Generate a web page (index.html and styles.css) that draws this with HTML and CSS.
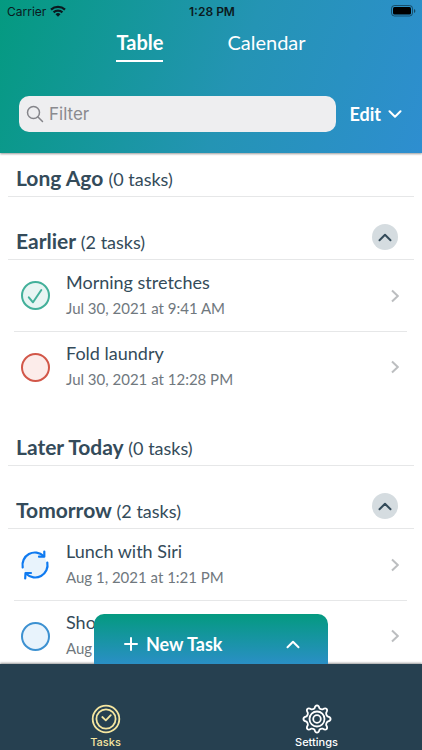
FILE: index.html
```html
<!DOCTYPE html>
<html lang="en">
  <head>
    <meta charset="UTF-8" />
    <meta name="viewport" content="width=device-width, initial-scale=1.0" />
    <title>Tasks</title>
    <link rel="stylesheet" href="styles.css" />
  </head>
  <body>
    <header class="top-bar">
      <div class="status-bar">
        <span class="carrier">
          Carrier
          <svg width="16" height="12" viewBox="0 0 16 12" fill="none" stroke="currentColor" stroke-width="2.2">
            <path d="M1 4.6a10.2 10.2 0 0 1 14 0" />
            <path d="M3.6 7.4a6.4 6.4 0 0 1 8.8 0" />
            <path d="M8 11.8l-2.5-2.6a3.6 3.6 0 0 1 5 0z" fill="currentColor" stroke="none" />
          </svg>
        </span>
        <span class="clock">1:28 PM</span>
        <svg class="battery" width="26" height="12" viewBox="0 0 26 12">
          <rect x="0.5" y="0.5" width="21" height="10.5" rx="3" fill="none" stroke="currentColor" stroke-opacity="0.45" />
          <rect x="2" y="2" width="18" height="7.5" rx="1.5" fill="currentColor" />
          <path d="M23 4v4q1.4-.6 1.4-2T23 4z" fill="currentColor" fill-opacity="0.5" />
        </svg>
      </div>

      <nav class="tabs">
        <a class="tab selected" href="#table">Table</a>
        <a class="tab" href="#calendar">Calendar</a>
      </nav>

      <div class="filter-row">
        <label class="search">
          <svg width="18" height="18" viewBox="0 0 18 18" fill="none" stroke="currentColor" stroke-width="1.5" stroke-linecap="round">
            <circle cx="7.5" cy="7.5" r="6" />
            <path d="M12 12l4.5 4.5" />
          </svg>
          <input type="text" placeholder="Filter" aria-label="Filter" />
        </label>
        <button class="edit-btn">
          Edit
          <svg width="14" height="8" viewBox="0 0 14 8" fill="none" stroke="currentColor" stroke-width="2" stroke-linecap="round" stroke-linejoin="round">
            <path d="M1.5 1.2L7 6.7l5.5-5.5" />
          </svg>
        </button>
      </div>
    </header>

    <main class="task-list">
      <section class="group">
        <div class="group-header">
          <h2>Long Ago <span>(0 tasks)</span></h2>
        </div>
      </section>

      <section class="group">
        <div class="group-header">
          <h2>Earlier <span>(2 tasks)</span></h2>
          <button class="collapse-btn" aria-label="Collapse Earlier">
            <svg width="14" height="9" viewBox="0 0 14 9" fill="none" stroke="currentColor" stroke-width="2" stroke-linecap="round" stroke-linejoin="round">
              <path d="M1.5 7.2L7 1.8l5.5 5.4" />
            </svg>
          </button>
        </div>
        <ul class="rows">
          <li class="row">
            <div class="status done">
              <input type="checkbox" id="task-1" checked />
              <svg width="30" height="30" viewBox="0 0 30 30" fill="none" stroke="currentColor" stroke-width="2" stroke-linecap="round" stroke-linejoin="round">
                <path d="M8.8 16.3l4.2 5L21.3 9" />
              </svg>
            </div>
            <label class="info" for="task-1">
              <span class="name">Morning stretches</span>
              <span class="date">Jul 30, 2021 at 9:41 AM</span>
            </label>
            <svg class="chevron" width="8" height="14" viewBox="0 0 8 14">
              <path d="M1 1.5L6.8 7 1 12.5" />
            </svg>
          </li>
          <li class="row">
            <div class="status late">
              <input type="checkbox" id="task-2" />
            </div>
            <label class="info" for="task-2">
              <span class="name">Fold laundry</span>
              <span class="date">Jul 30, 2021 at 12:28 PM</span>
            </label>
            <svg class="chevron" width="8" height="14" viewBox="0 0 8 14">
              <path d="M1 1.5L6.8 7 1 12.5" />
            </svg>
          </li>
        </ul>
      </section>

      <section class="group">
        <div class="group-header">
          <h2>Later Today <span>(0 tasks)</span></h2>
        </div>
      </section>

      <section class="group">
        <div class="group-header">
          <h2>Tomorrow <span>(2 tasks)</span></h2>
          <button class="collapse-btn" aria-label="Collapse Tomorrow">
            <svg width="14" height="9" viewBox="0 0 14 9" fill="none" stroke="currentColor" stroke-width="2" stroke-linecap="round" stroke-linejoin="round">
              <path d="M1.5 7.2L7 1.8l5.5 5.4" />
            </svg>
          </button>
        </div>
        <ul class="rows">
          <li class="row">
            <div class="status repeat">
              <input type="checkbox" id="task-3" />
              <svg width="30" height="30" viewBox="0 0 30 30" fill="none" stroke="currentColor" stroke-width="2.2" stroke-linecap="round" stroke-linejoin="round">
                <circle cx="15" cy="15" r="12" fill="#e8f3fc" stroke="none" />
                <path d="M2.7 17.500A12.500 12.500 0 0 1 23.600 6" />
                <path d="M24.300 1.500v5.200h-5.300" />
                <path d="M27.300 12.500A12.500 12.500 0 0 1 6.400 24" />
                <path d="M5.200 28.500l.3-5.500h5.500" />
              </svg>
            </div>
            <label class="info" for="task-3">
              <span class="name">Lunch with Siri</span>
              <span class="date">Aug 1, 2021 at 1:21 PM</span>
            </label>
            <svg class="chevron" width="8" height="14" viewBox="0 0 8 14">
              <path d="M1 1.5L6.8 7 1 12.5" />
            </svg>
          </li>
          <li class="row">
            <div class="status open">
              <input type="checkbox" id="task-4" />
            </div>
            <label class="info" for="task-4">
              <span class="name">Sho</span>
              <span class="date">Aug</span>
            </label>
            <svg class="chevron" width="8" height="14" viewBox="0 0 8 14">
              <path d="M1 1.5L6.8 7 1 12.5" />
            </svg>
          </li>
        </ul>
      </section>
    </main>

    <footer class="bottom-bar">
      <button class="new-task">
        <svg width="14" height="14" viewBox="0 0 14 14" fill="none" stroke="currentColor" stroke-width="2" stroke-linecap="round">
          <path d="M7 1v12M1 7h12" />
        </svg>
        <span>New Task</span>
        <svg class="expand" width="14" height="9" viewBox="0 0 14 9" fill="none" stroke="currentColor" stroke-width="2" stroke-linecap="round" stroke-linejoin="round">
          <path d="M1.5 7.2L7 1.8l5.5 5.4" />
        </svg>
      </button>

      <nav class="tab-bar">
        <a class="tab-item selected" href="#tasks">
          <svg width="30" height="30" viewBox="0 0 30 30" fill="none" stroke="currentColor" stroke-width="1.8" stroke-linecap="round" stroke-linejoin="round">
            <circle cx="15" cy="15" r="13.3" />
            <circle cx="15" cy="15" r="9.6" />
            <path d="M11.3 13l3.5 3.3 5-5.2" />
          </svg>
          Tasks
        </a>
        <a class="tab-item" href="#settings">
          <svg width="30" height="30" viewBox="0 0 30 30" fill="none" stroke="currentColor" stroke-width="1.8" stroke-linejoin="round">
            <path d="M12.4 4.6C12.9 2.4 13.4 1.4 15 1.4s2.1 1 2.6 3.2q1.6 1 2.9.8c1.9-1.2 3-1.6 4.1-.5s.7 2.2-.5 4.1q-.2 1.5 1.3 3.4c2.2.5 3.2 1 3.2 2.6s-1 2.1-3.2 2.6q-1.5 1.9-1.3 3.4c1.2 1.9 1.6 3 .5 4.1s-2.2.7-4.1-.5q-1.3-.2-2.9.8c-.5 2.200-1 3.200-2.600 3.200s-2.100-1-2.600-3.200q-1.600-1-2.900-.8c-1.900 1.200-3 1.600-4.100.5s-.7-2.200.5-4.100q.2-1.500-1.300-3.400C2.400 17.100 1.400 16.600 1.400 15s1-2.100 3.200-2.600q1.500-1.900 1.300-3.400c-1.200-1.900-1.600-3-.5-4.100s2.200-.7 4.100.5q1.300.2 2.900-.8z" />
            <circle cx="15" cy="15" r="7.5" />
            <circle cx="15" cy="15" r="3.800" />
          </svg>
          Settings
        </a>
      </nav>
    </footer>
  </body>
</html>
```

FILE: styles.css
```css
:root {
  --green: #049a80;
  --blue: #2e8ed0;
  --navy: #264050;
  --text-color: #344b5a;
  --muted: #70787e;
  --line: #e6e7e8;
  --yellow: #f5e6a0;
}

* {
  margin: 0;
  padding: 0;
  box-sizing: border-box;
}

body {
  height: 100vh;
  display: flex;
  flex-direction: column;
  font-family: Lato, "Open Sans", sans-serif;
  font-size: 18px;
  color: var(--text-color);
  background-color: #fff;
}

button {
  border: none;
  background: none;
  font: inherit;
  color: inherit;
  cursor: pointer;
}

a {
  color: inherit;
  text-decoration: none;
}

svg {
  display: block;
  flex-shrink: 0;
}

/* Header */
.top-bar {
  position: relative;
  z-index: 1;
  flex-shrink: 0;
  padding-bottom: 21px;
  color: #fff;
  background: linear-gradient(110deg, var(--green), #2494b4 55%, var(--blue));
  box-shadow: 0 1px 2px rgba(0, 0, 0, 0.4);
}

.status-bar {
  display: grid;
  grid-template-columns: 1fr auto 1fr;
  align-items: center;
  height: 22px;
  padding: 0 5px 0 7px;
  font-family: Inter, sans-serif;
  font-size: 12px;
  color: #0b1a20;
}

.carrier {
  display: flex;
  align-items: center;
  gap: 4px;
}

.clock {
  font-weight: 600;
}

.battery {
  justify-self: end;
  color: #000;
}

.tabs {
  display: flex;
  justify-content: center;
  gap: 64px;
  font-size: 20px;
  line-height: 24px;
  padding-top: 8px;
}

.tab {
  padding-bottom: 6px;
  border-bottom: 2px solid transparent;
}

.tab.selected {
  font-weight: 700;
  border-color: #fff;
}

.filter-row {
  display: flex;
  align-items: center;
  gap: 13px;
  padding: 34px 20px 0 19px;
}

.search {
  flex: 1;
  display: flex;
  align-items: center;
  gap: 5px;
  height: 36px;
  padding: 0 7px;
  border-radius: 10px;
  color: #85858a;
  background-color: #eeeef0;
}

.search input {
  flex: 1;
  min-width: 0;
  border: none;
  outline: none;
  background: none;
  font-family: Inter, sans-serif;
  font-size: 17px;
  color: var(--text-color);
}

.search input::placeholder {
  color: #8a8a8f;
}

.edit-btn {
  display: flex;
  align-items: center;
  gap: 7px;
  font-weight: 700;
}

/* Task list */
.task-list {
  flex: 1;
  min-height: 0;
  overflow-y: auto;
  scrollbar-width: none;
}

.group {
  padding: 0 8px;
  margin-bottom: 19px;
}

.group-header {
  display: flex;
  align-items: center;
  justify-content: space-between;
  height: 44px;
  padding: 5px 16px 0 8px;
  border-bottom: 1px solid var(--line);
}

.group-header h2 {
  font-size: 21px;
  font-weight: 700;
}

.group-header h2 span {
  font-size: 18px;
  font-weight: 400;
}

.collapse-btn {
  display: grid;
  place-items: center;
  width: 26px;
  height: 26px;
  margin-bottom: 6px;
  border-radius: 50%;
  background-color: #d5dce0;
}

.rows {
  list-style: none;
  padding: 0 7px 1px 6px;
}

.row {
  display: flex;
  align-items: center;
  gap: 16px;
  height: 71px;
  padding: 0 8px 0 6px;
}

.row + .row {
  border-top: 1px solid var(--line);
}

.status {
  display: grid;
  place-items: center;
  width: 30px;
}

.status > * {
  grid-area: 1 / 1;
}

.status svg {
  pointer-events: none;
}

.status input {
  appearance: none;
  width: 29px;
  height: 29px;
  border: 2px solid;
  border-radius: 50%;
  color: inherit;
  cursor: pointer;
}

.status.done {
  color: #43b09a;
}

.status.done input {
  background-color: #e8f5f3;
}

.status.late {
  color: #d25749;
}

.status.late input {
  background-color: #fcecea;
}

.status.open {
  color: #3d91d1;
}

.status.open input {
  background-color: #e8f3fc;
}

.status.repeat {
  color: #0f7af0;
}

.status.repeat input {
  border-color: transparent;
}

.info {
  flex: 1;
  display: flex;
  flex-direction: column;
  gap: 4px;
  padding-bottom: 2px;
}

.name {
  line-height: 22px;
}

.date {
  font-size: 15px;
  line-height: 22px;
  color: var(--muted);
}

.chevron {
  fill: none;
  stroke: #bcbec0;
  stroke-width: 2;
}

/* Footer */
.bottom-bar {
  position: relative;
  flex-shrink: 0;
  background-color: var(--navy);
  box-shadow: 0 -1px 2px rgba(0, 0, 0, 0.4);
}

.new-task {
  position: absolute;
  bottom: 100%;
  left: 50%;
  transform: translateX(-50%);
  display: flex;
  align-items: center;
  gap: 8px;
  width: 234px;
  height: 50px;
  padding: 10px 28px 0 30px;
  border-radius: 10px 10px 0 0;
  font-weight: 700;
  color: #fff;
  background: linear-gradient(var(--green), #2a8fc5);
}

.expand {
  margin-left: auto;
}

.tab-bar {
  display: flex;
  padding: 40px 0 1px;
}

.tab-item {
  flex: 1;
  display: flex;
  flex-direction: column;
  align-items: center;
  gap: 1px;
  font-family: Inter, sans-serif;
  font-size: 11px;
  line-height: 14px;
  font-weight: 500;
  color: #fff;
}

.tab-item.selected {
  color: var(--yellow);
}
```
